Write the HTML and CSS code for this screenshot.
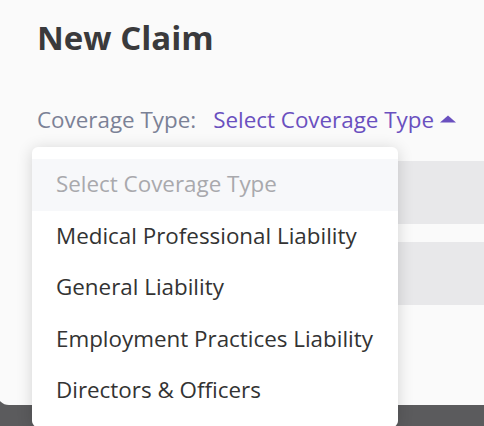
FILE: index.html
```html
<!DOCTYPE html>
<html lang="en">
<head>
    <meta charset="UTF-8">
    <meta name="viewport" content="width=device-width, initial-scale=1.0">
    <title>New Claim</title>
    <link rel="stylesheet" href="styles.css">
</head>
<body>
    <div class="modal">
        <h1>New Claim</h1>

        <div class="coverage-row">
            <span class="coverage-label">Coverage Type:</span>
            <span class="coverage-select">
                Select Coverage Type
                <svg class="caret" width="18" height="8" viewBox="0 0 18 8"><path d="M1 7.5 L9 0.5 L17 7.5 Z" fill="#6a50bf"/></svg>
            </span>
        </div>

        <div class="field-bar"></div>
        <div class="field-bar"></div>

        <ul class="dropdown">
            <li class="option placeholder">Select Coverage Type</li>
            <li class="option">Medical Professional Liability</li>
            <li class="option">General Liability</li>
            <li class="option">Employment Practices Liability</li>
            <li class="option">Directors &amp; Officers</li>
        </ul>
    </div>
</body>
</html>
```

FILE: styles.css
```css
body {
    margin: 0;
    background-color: #5b5b5d;
    font-family: "Open Sans", "Liberation Sans", sans-serif;
    overflow: hidden;
    height: 426px;
}
.modal {
    position: relative;
    background-color: #fafafa;
    border-radius: 12px 0 0 12px;
    margin: -6px 0 0 -3px;
    height: 411px;
    padding: 22px 0 0 40px;
    box-sizing: border-box;
}
h1 {
    margin: 0;
    font-size: 33px;
    line-height: 44px;
    font-weight: 700;
    color: #3a3a3c;
}
.coverage-row {
    display: flex;
    align-items: center;
    gap: 17px;
    margin-top: 46px;
    font-size: 22.4px;
    line-height: 28px;
}
.coverage-label {
    color: #7b8196;
}
.coverage-select {
    display: flex;
    align-items: center;
    gap: 5px;
    color: #6a50bf;
}
.caret {
    margin-top: -3px;
}
.field-bar {
    height: 63px;
    background-color: #e8e8ea;
    margin-top: 18px;
}
.coverage-row + .field-bar {
    margin-top: 27px;
}
.dropdown {
    position: absolute;
    top: 153px;
    left: 35px;
    width: 366px;
    margin: 0;
    padding: 12px 0 10px;
    list-style: none;
    background-color: #fff;
    border-radius: 6px;
    box-shadow: 0 2px 16px rgba(0, 0, 0, 0.16);
}
.option {
    padding: 11px 24px 13px;
    font-size: 22.4px;
    line-height: 27.5px;
    color: #333;
}
.option.placeholder {
    background-color: #f7f8fa;
    color: #a9a9ad;
}
```
